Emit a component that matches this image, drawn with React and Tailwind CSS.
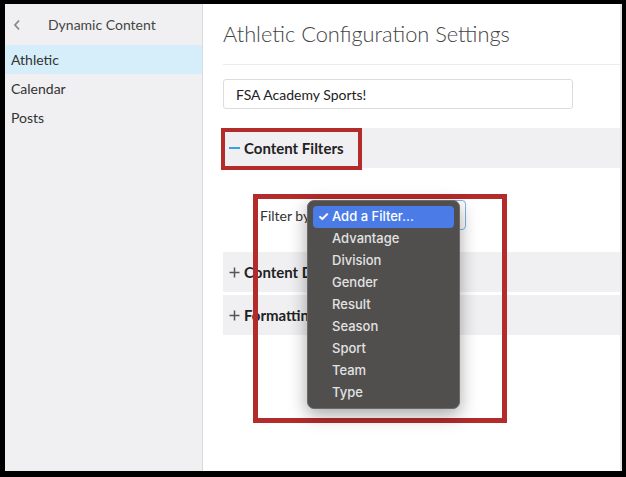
import React from 'react';

const filters = ['Advantage', 'Division', 'Gender', 'Result', 'Season', 'Sport', 'Team', 'Type'];

function Sidebar() {
  return (
    <aside className="w-[198px] shrink-0 bg-[#f0f0f2] border-r border-[#d9d9de] text-[14px] text-[#333]">
      <div className="h-[41px] flex items-center relative">
        <svg className="absolute left-[8px] top-[15px]" width="8" height="12" viewBox="0 0 8 12">
          <path d="M6 1.5 L2 6 L6 10.5" fill="none" stroke="#888" strokeWidth="1.8" />
        </svg>
        <span className="pl-[43px] text-[#444]">Dynamic Content</span>
      </div>
      <nav>
        <div className="h-[29px] flex items-center pl-[6px] bg-[#d6eefa]">Athletic</div>
        <div className="h-[29px] flex items-center pl-[6px]">Calendar</div>
        <div className="h-[29px] flex items-center pl-[6px]">Posts</div>
      </nav>
    </aside>
  );
}

function SectionBar({ open, title }) {
  return (
    <div className="h-[40px] bg-[#f0f0f2] flex items-center pl-[6px] gap-[4px] text-[15px] font-bold text-[#222]">
      {open ? (
        <span className="w-[11px] h-[2px] bg-[#3aa0e0]"></span>
      ) : (
        <svg width="11" height="11" viewBox="0 0 11 11">
          <path d="M5.5 0.5 V10.5 M0.5 5.5 H10.5" stroke="#555" strokeWidth="1.5" />
        </svg>
      )}
      <span>{title}</span>
    </div>
  );
}

export default function App() {
  return (
    <div
      className="w-[626px] h-[477px] bg-black pt-[4px] pl-[5px] pr-[4px] pb-[6px]"
      style={{ fontFamily: 'Lato, "Open Sans", sans-serif' }}
    >
      <div className="flex h-full">
        <Sidebar />
        <main className="flex-1 bg-white pl-[20px] border-r-2 border-[#e6e6e6] relative">
          <div className="h-[61px] flex items-center border-b border-[#ececef] text-[21.8px] font-light text-[#444]">
            Athletic Configuration Settings
          </div>
          <div className="mt-[14px] w-[350px] h-[30px] border border-[#dcdcdc] rounded-[3px] flex items-center pl-[12px] text-[14px] text-[#222]">
            FSA Academy Sports!
          </div>

          <div className="mt-[19px]">
            <SectionBar open title="Content Filters" />
          </div>

          <div className="h-[84px] flex items-center pl-[37px] pt-[10px] gap-[4px] text-[14px] text-[#333]">
            <span>Filter by</span>
            <div className="w-[152px] h-[30px] border border-[#7fb3e6] rounded-[4px]"></div>
          </div>

          <div className="flex flex-col gap-[3px]">
            <SectionBar title="Content Display" />
            <SectionBar title="Formatting Options" />
          </div>

          {/* annotation boxes */}
          <div className="absolute left-[18px] top-[124px] w-[141px] h-[42px] border-4 border-[#b32b2b]"></div>
          <div className="absolute left-[50px] top-[190px] w-[254px] h-[229px] border-[5px] border-[#b32b2b]"></div>

          {/* open select menu */}
          <div
            className="absolute left-[104px] top-[196px] w-[153px] h-[209px] bg-[#504f4e] rounded-[7px] border border-[#6a6a6a] shadow-[0_6px_18px_rgba(0,0,0,0.35)] px-[5px] pt-[5px] text-[13px] font-medium text-[#e2e2e2]"
            style={{ fontFamily: 'Inter, "Open Sans", sans-serif' }}
          >
            <div className="h-[22px] bg-[#4a7be6] rounded-[4px] flex items-center text-white">
              <span className="w-[19px] text-right pr-[3px] font-bold">✓</span>
              <span>Add a Filter...</span>
            </div>
            {filters.map((f) => (
              <div key={f} className="h-[22px] flex items-center pl-[19px]">
                {f}
              </div>
            ))}
          </div>
        </main>
      </div>
    </div>
  );
}
